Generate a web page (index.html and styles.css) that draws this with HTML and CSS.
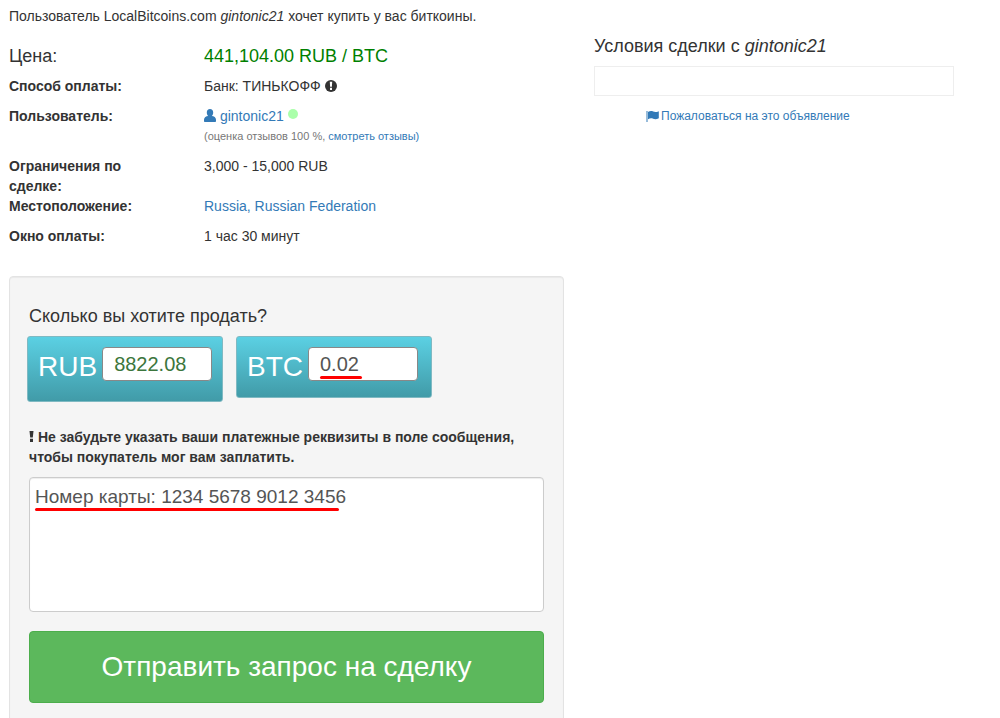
FILE: index.html
```html
<!DOCTYPE html>
<html lang="ru">
<head>
    <meta charset="UTF-8">
    <meta name="viewport" content="width=device-width, initial-scale=1.0">
    <title>LocalBitcoins.com</title>
    <link rel="stylesheet" href="styles.css">
</head>
<body>
    <main class="container">
        <p class="intro">Пользователь LocalBitcoins.com <i>gintonic21</i> хочет купить у вас биткоины.</p>

        <div class="columns">
            <div class="main-col">
                <dl class="details">
                    <div class="row price-row">
                        <dt>Цена:</dt>
                        <dd class="price">441,104.00 RUB / BTC</dd>
                    </div>
                    <div class="row">
                        <dt>Способ оплаты:</dt>
                        <dd>Банк: ТИНЬКОФФ
                            <svg class="icon" viewBox="0 0 12 12" width="12" height="12" aria-hidden="true">
                                <circle cx="6" cy="6" r="6" fill="#333"/>
                                <path d="M4.800 1.800h2.400l-.3 5H5.100zM5 7.800h2V10H5z" fill="#fff"/>
                            </svg>
                        </dd>
                    </div>
                    <div class="row">
                        <dt>Пользователь:</dt>
                        <dd>
                            <a href="#"><svg class="icon" viewBox="0 0 12 13" width="12" height="13" aria-hidden="true">
                                <path d="M6 0c2 0 3.200 1.400 3.200 3.400 0 1.400-.5 2.700-1.300 3.500C9.900 7.200 12 8 12 10.800v1.200c0 .6-.4 1-1 1H1c-.6 0-1-.4-1-1v-1.200C0 8 2.100 7.200 4.100 6.900 3.300 6.100 2.800 4.800 2.800 3.400 2.800 1.400 4 0 6 0z" fill="#337ab7"/>
                            </svg> gintonic21</a>
                            <span class="online"></span>
                            <div class="feedback">(оценка отзывов 100 %, <a href="#">смотреть отзывы)</a></div>
                        </dd>
                    </div>
                    <div class="row row-tight">
                        <dt>Ограничения по сделке:</dt>
                        <dd>3,000 - 15,000 RUB</dd>
                    </div>
                    <div class="row">
                        <dt>Местоположение:</dt>
                        <dd><a href="#">Russia, Russian Federation</a></dd>
                    </div>
                    <div class="row">
                        <dt>Окно оплаты:</dt>
                        <dd>1 час 30 минут</dd>
                    </div>
                </dl>

                <form class="well">
                    <h4>Сколько вы хотите продать?</h4>
                    <div class="amounts">
                        <div class="amount amount-rub">
                            <label for="rub">RUB</label>
                            <input type="text" id="rub" name="rub" value="8822.08">
                        </div>
                        <div class="amount">
                            <label for="btc">BTC</label>
                            <div class="marked">
                                <input type="text" id="btc" name="btc" value="0.02">
                                <span class="mark mark-btc"></span>
                            </div>
                        </div>
                    </div>

                    <label class="message-label" for="message"><svg viewBox="0 0 5 12" width="5" height="12" aria-hidden="true">
                        <path d="M.5 1h4l-.7 6.500H1.200zM1 8.800h3V12H1z" fill="#333"/>
                    </svg> Не забудьте указать ваши платежные реквизиты в поле сообщения, чтобы покупатель мог вам заплатить.</label>
                    <div class="marked">
                        <textarea id="message" name="message">Номер карты: 1234 5678 9012 3456</textarea>
                        <span class="mark mark-message"></span>
                    </div>

                    <button type="submit" class="btn-send">Отправить запрос на сделку</button>
                </form>
            </div>

            <aside class="side-col">
                <h4>Условия сделки с <i>gintonic21</i></h4>
                <div class="terms"></div>
                <a class="report" href="#"><svg viewBox="0 0 13 12" width="13" height="12" aria-hidden="true">
                    <path d="M.5 1h1v11h-1zM2 2c1.700-1 3.500-1.200 5.200-.4 1.800.8 3.300.6 5.600-.4v7c-2.200 1.100-3.900 1.200-5.700.5-1.700-.7-3.400-.5-5.100.5z" fill="#337ab7"/>
                </svg> <span>Пожаловаться на это объявление</span></a>
            </aside>
        </div>
    </main>
</body>
</html>
```

FILE: styles.css
```css
* {
    box-sizing: border-box;
}

body {
    margin: 0;
    font-family: "Liberation Sans", Arial, sans-serif;
    font-size: 14px;
    line-height: 20px;
    color: #333;
    background: #fff;
}

a {
    color: #337ab7;
    text-decoration: none;
}

a:hover {
    text-decoration: underline;
}

h4 {
    margin: 0;
    font-size: 18px;
    font-weight: normal;
    line-height: 20px;
}

.container {
    padding: 6px 46px 0 9px;
}

.intro {
    margin: 0 0 10px;
}

.columns {
    display: grid;
    grid-template-columns: 37fr 24fr;
    gap: 30px;
    align-items: start;
}

/* Ad details */
.details {
    margin: 0 0 30px;
    padding-top: 10px;
}

.row {
    display: grid;
    grid-template-columns: 11fr 24fr;
    column-gap: 30px;
    margin-bottom: 10px;
}

.row-tight {
    margin-bottom: 0;
}

.row dt {
    font-weight: bold;
}

.row dd {
    margin: 0;
}

.price-row {
    font-size: 18px;
}

.price-row dt {
    font-weight: normal;
}

.price {
    color: green;
}

.icon {
    vertical-align: -1px;
}

.online {
    display: inline-block;
    width: 10px;
    height: 10px;
    border-radius: 50%;
    background: #afa;
    vertical-align: 2px;
}

.feedback {
    font-size: 11px;
    color: #777;
}

/* Trade form */
.well {
    padding: 29px 19px 19px;
    background: #f5f5f5;
    border: 1px solid #e3e3e3;
    border-radius: 4px;
    box-shadow: inset 0 1px 1px rgba(0, 0, 0, 0.05);
}

.amounts {
    display: flex;
    align-items: flex-start;
    gap: 13px;
    margin: 10px 0 25px -2px;
}

.amount {
    display: flex;
    align-items: flex-start;
    gap: 5px;
    width: 196px;
    padding: 10px 10px 13px;
    border: 1px solid #7fb9c2;
    border-radius: 3px;
    background: linear-gradient(#5bd0e3, #419ba8);
}

.amount-rub {
    padding-bottom: 17px;
}

.amount label {
    padding-top: 3px;
    font-size: 28px;
    line-height: 34px;
    color: #fff;
}

.amount input {
    display: block;
    width: 110px;
    height: 34px;
    padding: 0 11px;
    border: 1px solid #888;
    border-radius: 4px;
    background: #fff;
    font-family: inherit;
    font-size: 20px;
    color: #555;
}

.amount-rub input {
    color: #3c763d;
}

.message-label {
    display: block;
    margin-bottom: 10px;
    font-weight: bold;
}

.marked {
    position: relative;
}

.mark {
    position: absolute;
    height: 3px;
    border-radius: 2px;
    background: #f00;
}

.mark-btc {
    left: 12px;
    bottom: 2px;
    width: 42px;
}

.mark-message {
    left: 6px;
    top: 31px;
    width: 304px;
}

textarea {
    display: block;
    width: 100%;
    height: 135px;
    padding: 6px 5px;
    border: 1px solid #ccc;
    border-radius: 4px;
    box-shadow: inset 0 1px 1px rgba(0, 0, 0, 0.075);
    background: #fff;
    font-family: inherit;
    font-size: 19px;
    line-height: 25px;
    color: #555;
    resize: none;
}

.btn-send {
    width: 100%;
    height: 72px;
    margin-top: 19px;
    border: 1px solid #4cae4c;
    border-radius: 4px;
    background: #5cb85c;
    font-family: inherit;
    font-size: 28px;
    color: #fff;
    cursor: pointer;
}

/* Terms */
.terms {
    height: 30px;
    margin: 10px 0;
    border: 1px solid #eee;
}

.report {
    display: flex;
    align-items: center;
    gap: 2px;
    padding-left: 52px;
    font-size: 12px;
}
```
